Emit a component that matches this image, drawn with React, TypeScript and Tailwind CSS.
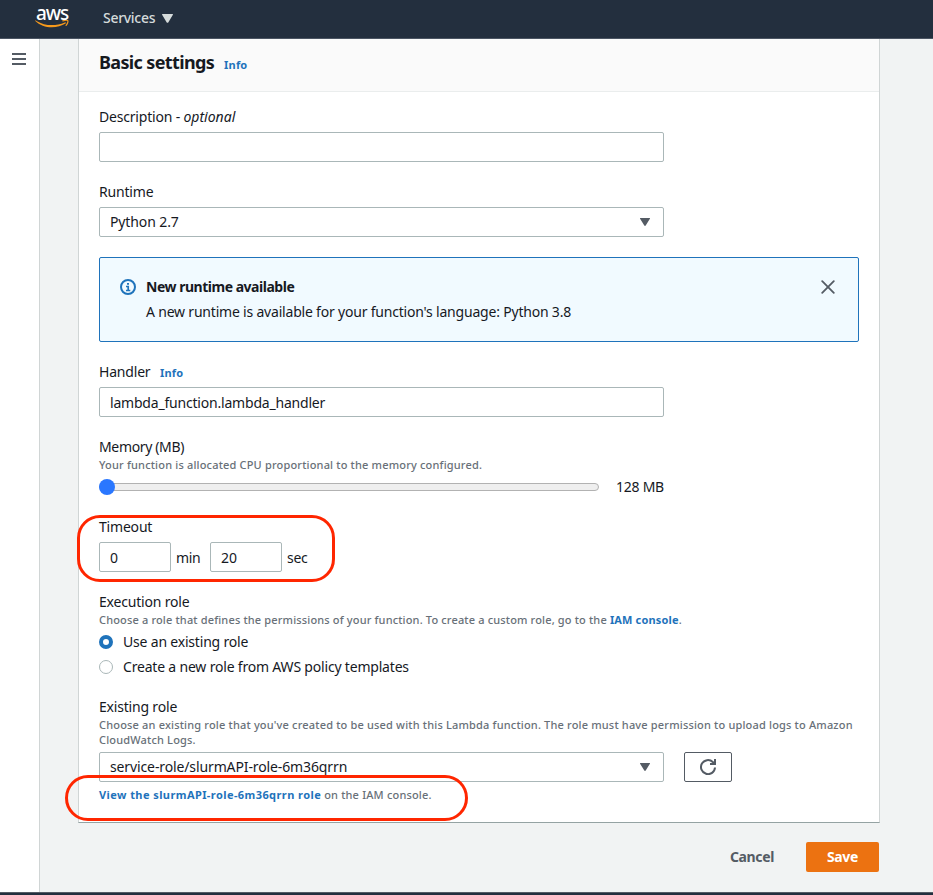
import type { ReactNode } from "react";

function Caret({ className }: { className: string }) {
  return (
    <svg className={className} viewBox="0 0 10 8" preserveAspectRatio="none" fill="currentColor">
      <path d="M0.4 0h9.2c.4 0 .5.4.3.7L5.7 7.5c-.3.5-1.1.5-1.4 0L.1.7C-.1.4 0 0 .4 0z" />
    </svg>
  );
}

function AwsLogo() {
  return (
    <div className="flex w-[34px] flex-col items-center">
      <span className="h-[14px] text-[19px] leading-[14px] font-medium tracking-[-1.1px] text-white">aws</span>
      <svg className="h-[8px] w-[34px]" viewBox="0 0 34 8" fill="none">
        <path d="M0 .8C.4.3.9.5 1.500.9 10 6 20.500 6.300 29.800 2.400c.900-.3 1.500.5.7 1.200C22.500 8.600 8.500 9.300 0 .8z" fill="#f79a1c" />
        <path d="M27.800.9c2-.7 4.500-.7 5-.2.4.6-.2 3.200-1.700 4.700" stroke="#f79a1c" strokeWidth="1.200" strokeLinecap="round" />
      </svg>
    </div>
  );
}

function Label({ children }: { children: ReactNode }) {
  return <div className="h-5 text-[14px] leading-5 tracking-[-0.19px] whitespace-nowrap">{children}</div>;
}

function Hint({ children }: { children: ReactNode }) {
  return <div className="text-[11px] leading-[15px] font-medium tracking-[0.175px] whitespace-nowrap text-[#687078]">{children}</div>;
}

function Link({ children }: { children: ReactNode }) {
  return <a className="font-bold text-[#1f73bb]">{children}</a>;
}

function Box({ className, children }: { className: string; children?: ReactNode }) {
  return (
    <div className={`flex h-[30px] items-center rounded-[2px] border border-[#aab7b8] bg-white px-[10px] text-[14px] ${className}`}>
      {children}
    </div>
  );
}

function Select({ children }: { children: ReactNode }) {
  return (
    <Box className="w-[565px] justify-between pr-[13px] tracking-[-0.12px]">
      <span className="pb-[2px]">{children}</span>
      <Caret className="h-2 w-[10px] text-[#545b64]" />
    </Box>
  );
}

function Radio({ checked, label }: { checked?: boolean; label: string }) {
  return (
    <div className="flex h-5 items-center gap-[10px] text-[14px] tracking-[-0.19px]">
      <span
        className={
          checked
            ? "size-[14px] rounded-full border-4 border-[#1f73bb] bg-white"
            : "size-[14px] rounded-full border border-[#aab7b8] bg-white"
        }
      />
      <span className="pb-[2px]">{label}</span>
    </div>
  );
}

export default function App() {
  return (
    <div className="relative flex h-[895px] w-[933px] flex-col overflow-hidden bg-[#f1f3f3] font-['Noto_Sans','Open_Sans',sans-serif] text-[#16191f]">
      <header className="flex h-[39px] shrink-0 items-start border-b border-[#4b5563] bg-[#232f3e] pt-[6px] pl-[35px]">
        <AwsLogo />
        <div className="ml-[34px] flex h-6 items-center gap-[7px] text-[14px] font-medium tracking-[-0.3px] text-[#d5dbdb]">
          <span className="pb-px">Services</span>
          <Caret className="h-[9px] w-[11px]" />
        </div>
      </header>

      <div className="flex min-h-0 flex-1">
        <nav className="w-10 shrink-0 border-r border-[#d0d5d5] bg-white pt-[14px] pl-3">
          <div className="flex w-[14px] flex-col gap-[3px]">
            <span className="h-[2px] bg-[#545b64]" />
            <span className="h-[2px] bg-[#545b64]" />
            <span className="h-[2px] bg-[#545b64]" />
          </div>
        </nav>

        <main className="ml-[38px] w-[802px]">
          <section className="h-[784px] border-x border-b border-x-[#d0d5d5] border-b-[#95a3a3] bg-white">
            <div className="flex h-[53px] items-baseline gap-[10px] border-b border-[#eaeded] bg-[#fafafa] px-5 pt-[11px]">
              <h2 className="text-[18px] leading-6 font-bold tracking-[-0.64px]">Basic settings</h2>
              <span className="text-[11px] tracking-[0.2px]"><Link>Info</Link></span>
            </div>

            <div className="flex flex-col gap-5 px-5 pt-[15px]">
              <div className="flex flex-col gap-[5px]">
                <Label>Description - <i className="tracking-[0px]">optional</i></Label>
                <Box className="w-[565px]" />
              </div>

              <div className="flex flex-col gap-[5px]">
                <Label>Runtime</Label>
                <Select>Python 2.7</Select>
              </div>

              <div className="flex h-[85px] w-[760px] items-start rounded-[2px] border border-[#1f73bb] bg-[#f1faff] pt-[19px] pr-[23px] pl-5">
                <svg className="mt-[2px] size-4" viewBox="0 0 16 16" fill="none" stroke="#1f73bb">
                  <circle cx="8" cy="8" r="7" strokeWidth="2" />
                  <path d="M7 4.900h2M6 7.500h2.200v4M6 11.500h4.300" strokeWidth="1.700" />
                </svg>
                <div className="ml-[10px] flex-1">
                  <div className="h-5 text-[14px] leading-5 font-bold tracking-[-0.48px]">New runtime available</div>
                  <div className="mt-[5px] text-[14px] leading-5 tracking-[-0.2px]">
                    A new runtime is available for your function&apos;s language: Python 3.8
                  </div>
                </div>
                <svg className="mt-[3px] size-[14px]" viewBox="0 0 14 14" stroke="#545b64" strokeWidth="1.800" strokeLinecap="round">
                  <path d="M1.200 1.200l11.600 11.600M12.800 1.200L1.200 12.800" />
                </svg>
              </div>

              <div className="flex flex-col gap-[5px]">
                <Label>
                  Handler <span className="ml-[6px] text-[11px] tracking-[0.2px]"><Link>Info</Link></span>
                </Label>
                <Box className="w-[565px] tracking-[-0.2px]">lambda_function.lambda_handler</Box>
              </div>

              <div className="flex flex-col">
                <Label><span className="tracking-[-0.35px]">Memory (MB)</span></Label>
                <Hint>Your function is allocated CPU proportional to the memory configured.</Hint>
                <div className="mt-[5px] flex h-5 items-center">
                  <div className="flex h-2 w-[500px] items-center rounded-full border border-[#b2b2b2] bg-[#efefef]">
                    <span className="-ml-px size-4 shrink-0 rounded-full bg-[#2a77ff]" />
                  </div>
                  <span className="ml-[17px] pb-[2px] text-[14px] tracking-[-0.25px]">128 MB</span>
                </div>
              </div>

              <div className="flex flex-col gap-[5px]">
                <Label>Timeout</Label>
                <div className="flex items-center text-[14px] tracking-[-0.3px]">
                  <Box className="w-[72px]">0</Box>
                  <span className="ml-[5px] w-[34px]">min</span>
                  <Box className="w-[72px] tracking-[0px]">20</Box>
                  <span className="ml-[5px]">sec</span>
                </div>
              </div>

              <div className="flex flex-col">
                <Label>Execution role</Label>
                <Hint>
                  <span className="tracking-[0.155px]">Choose a role that defines the permissions of your function. To create a custom role, go to the <Link>IAM console</Link>.</span>
                </Hint>
                <div className="mt-[5px] flex flex-col gap-[5px]">
                  <Radio checked label="Use an existing role" />
                  <Radio label="Create a new role from AWS policy templates" />
                </div>
              </div>

              <div className="flex flex-col">
                <Label>Existing role</Label>
                <Hint>
                  Choose an existing role that you&apos;ve created to be used with this Lambda function. The role must have permission to upload logs to Amazon
                  <br />
                  CloudWatch Logs.
                </Hint>
                <div className="my-[5px] flex gap-5">
                  <Select>service-role/slurmAPI-role-6m36qrrn</Select>
                  <button className="flex h-[30px] w-12 items-center justify-center rounded-[2px] border border-[#545b64] bg-white">
                    <svg className="size-4" viewBox="0 0 16 16" fill="none" stroke="#545b64" strokeWidth="2">
                      <path d="M15 8.500A7 7 0 1 1 12.800 3l1.700 1.700" />
                      <path d="M15 0v5h-5" />
                    </svg>
                  </button>
                </div>
                <Hint>
                  <span className="tracking-[0.42px]"><Link>View the slurmAPI-role-6m36qrrn role</Link></span> on the IAM console.
                </Hint>
              </div>
            </div>
          </section>

          <div className="mt-[19px] flex justify-end pr-px text-[14px] font-bold tracking-[-0.37px]">
            <button className="mr-8 h-[30px] pb-[2px] text-[#545b64]">Cancel</button>
            <button className="h-[30px] w-[73px] rounded-[2px] bg-[#ec7211] pb-[2px] text-white">Save</button>
          </div>
        </main>
      </div>

      <footer className="h-[3px] shrink-0 border-t border-[#545b64] bg-[#232f3e]" />

      <div className="absolute top-[515px] left-[77px] h-[67px] w-[258px] rounded-[23px] border-3 border-[#ff2600]" />
      <div className="absolute top-[775px] left-[65px] h-[46px] w-[403px] rounded-[23px] border-3 border-[#ff2600]" />
    </div>
  );
}
